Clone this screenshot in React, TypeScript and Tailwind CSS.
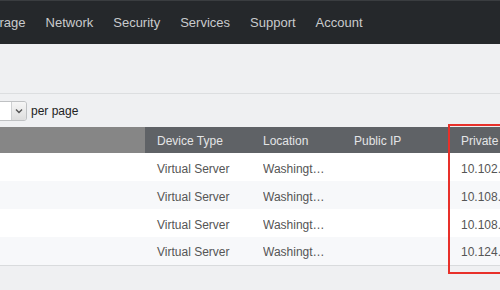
import React from "react";

const NAV = ["Storage", "Network", "Security", "Services", "Support", "Account"];

const ROWS = [
  { type: "Virtual Server", location: "Washington 4", publicIp: "", privateIp: "10.102.14.27" },
  { type: "Virtual Server", location: "Washington 4", publicIp: "", privateIp: "10.108.95.12" },
  { type: "Virtual Server", location: "Washington 4", publicIp: "", privateIp: "10.108.96.40" },
  { type: "Virtual Server", location: "Washington 4", publicIp: "", privateIp: "10.124.136.9" },
];

export default function App() {
  return (
    <div
      className="relative h-[290px] w-[500px] overflow-hidden bg-[#eff0f2]"
      style={{ fontFamily: '"Liberation Sans", Arial, sans-serif' }}
    >
      <nav className="flex h-[44px] items-center border-t border-[#3a3d40] bg-[#25282b]">
        <div className="-ml-[30px] flex items-center whitespace-nowrap">
          {NAV.map((item) => (
            <span key={item} className="px-[10px] text-[13px] text-[#c9cbcd]">
              {item}
            </span>
          ))}
        </div>
      </nav>

      <div className="h-[50px] border-b border-[#dcdee0]" />

      <div className="flex h-[33px] items-center">
        <div className="-ml-[12px] flex h-[20px] w-[39px] overflow-hidden rounded-[3px] border border-[#bfc1c3]">
          <div className="flex-1 bg-white" />
          <div className="flex w-[15px] items-center justify-center border-l border-[#cfd1d3] bg-gradient-to-b from-[#f6f6f6] to-[#dedede]">
            <svg width="8" height="6" viewBox="0 0 8 6">
              <path d="M1 1.5 L4 4.5 L7 1.5" fill="none" stroke="#555" strokeWidth="1.4" />
            </svg>
          </div>
        </div>
        <span className="ml-[4px] text-[12px] text-[#222]">per page</span>
      </div>

      <table className="w-[560px] table-fixed border-collapse text-[12px]">
        <colgroup>
          <col className="w-[145px]" />
          <col className="w-[106px]" />
          <col className="w-[91px]" />
          <col className="w-[107px]" />
          <col className="w-[111px]" />
        </colgroup>
        <thead>
          <tr className="h-[26px] text-left text-[#e4e5e6]">
            <th className="bg-[#868686] font-normal" />
            <th className="bg-[#5f6266] pl-[12px] pt-[1px] font-normal">Device Type</th>
            <th className="bg-[#5f6266] pl-[12px] pt-[1px] font-normal">Location</th>
            <th className="bg-[#5f6266] pl-[12px] pt-[1px] font-normal">Public IP</th>
            <th className="whitespace-nowrap bg-[#5f6266] pl-[12px] pt-[1px] font-normal">Private IP</th>
          </tr>
        </thead>
        <tbody className="text-[#555]">
          {ROWS.map((r, i) => (
            <tr
              key={i}
              className={
                "h-[28px] " +
                (i % 2 === 0 ? "bg-white" : "bg-[#f7f8fa]") +
                (i === ROWS.length - 1 ? " border-b border-[#d9dbdd]" : "")
              }
            >
              <td />
              <td className="pl-[12px] pt-[3px]">{r.type}</td>
              <td className="pl-[12px] pr-[14px] pt-[3px]">
                <div className="truncate">{r.location}</div>
              </td>
              <td className="pl-[12px] pt-[3px]">{r.publicIp}</td>
              <td className="whitespace-nowrap pl-[12px] pt-[3px]">{r.privateIp}</td>
            </tr>
          ))}
        </tbody>
      </table>

      <div className="pointer-events-none absolute left-[448px] top-[124px] h-[150px] w-[70px] border-2 border-[#e8302a]" />
    </div>
  );
}
